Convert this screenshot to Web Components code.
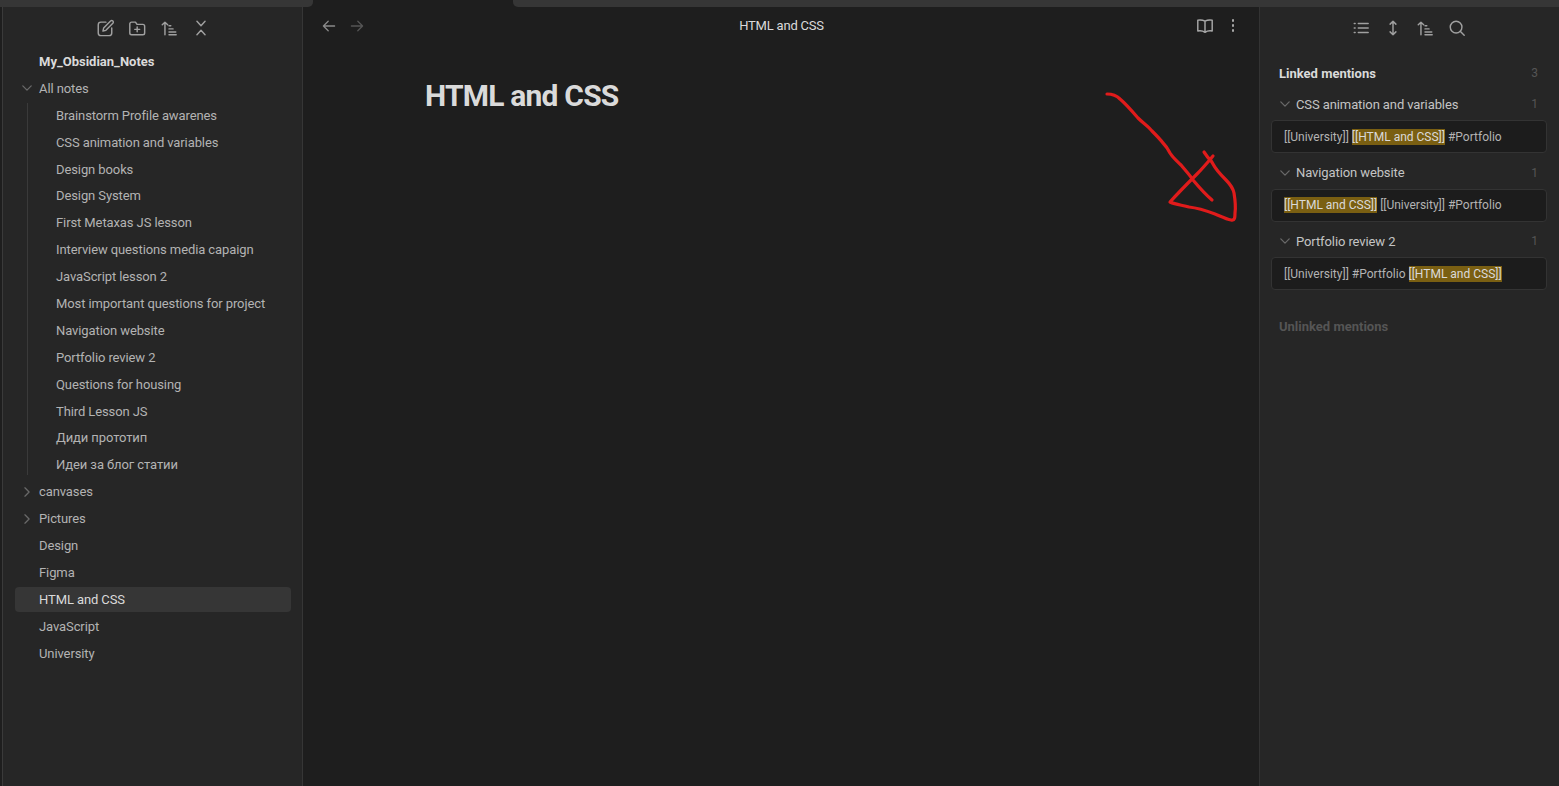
<!DOCTYPE html>
<html>
<head>
<meta charset="utf-8">
<title>HTML and CSS</title>
<style>
  html, body { margin: 0; height: 100%; background: #1e1e1e; overflow: hidden; }
  body { font-family: Roboto, "Open Sans", sans-serif; color: #b3b3b3; }
</style>
</head>
<body>
<obs-app>
  <file-explorer slot="left"></file-explorer>
  <note-view slot="main" title-text="HTML and CSS"></note-view>
  <backlink-pane slot="right"></backlink-pane>
</obs-app>

<script>
const ICONS = {
  edit: '<path d="M11 3.5H5.5a3 3 0 0 0-3 3v9a3 3 0 0 0 3 3h9a3 3 0 0 0 3-3V10"/><path d="M16.2 2.3a1.6 1.6 0 0 1 2.5 2.5L11 12.6l-3.3.8.8-3.3z"/>',
  folder: '<path d="M4 17.5h12.5a2 2 0 0 0 2-2V8a2 2 0 0 0-2-2H10L8.3 3.5H4a2 2 0 0 0-2 2v10a2 2 0 0 0 2 2z"/><path d="M10.2 8.8v5.5M7.5 11.5H13"/>',
  sort: '<path d="M5.5 17.5V3.5M2.5 6.5l3-3 3 3"/><path d="M10 7.5h2M10 11h4.5M10 14.5h7.5M10 17.5h8"/>',
  collapse: '<path d="M5.500 2.500 10 7.500l4.500-5M5.500 17.500 10 12.500l4.500 5"/>',
  list: '<path d="M7 5h11M7 10h11M7 15h11M2.500 5h1M2.500 10h1M2.500 15h1"/>',
  expand: '<path d="M10 2.500v15M6.800 5.700 10 2.500l3.200 3.200M6.800 14.300 10 17.500l3.200-3.200"/>',
  search: '<circle cx="9" cy="9" r="6.500"/><path d="m18 18-4.400-4.400"/>',
  back: '<path d="M17 10H3M9 4l-6 6 6 6"/>',
  forward: '<path d="M3 10h14M11 4l6 6-6 6"/>',
  book: '<path d="M10 5.500V17M10 4.500C8 3.500 5 3 2 3.500v12c3-.5 6 0 8 1.500 2-1.500 5-2 8-1.500v-12C15 3 12 3.500 10 4.500z"/>',
  chevronDown: '<path d="m4 7 6 6 6-6"/>',
  chevronRight: '<path d="m7 4 6 6-6 6"/>'
};

function iconSvg(name, size, weight) {
  return `<svg width="${size}" height="${size}" viewBox="0 0 20 20" fill="none" stroke="currentColor" stroke-width="${weight || 1.6}" stroke-linecap="round" stroke-linejoin="round">${ICONS[name]}</svg>`;
}

/** Icon button */
class ObsIcon extends HTMLElement {
  connectedCallback() {
    const size = this.getAttribute("size") || 18;
    this.attachShadow({ mode: "open" });
    this.shadowRoot.innerHTML = `
      <style>
        :host { display: inline-flex; align-items: center; justify-content: center; color: inherit; }
        svg { display: block; }
      </style>
      ${iconSvg(this.getAttribute("name"), size, this.getAttribute("weight"))}`;
  }
}

/** App shell */
const appTemplate = document.createElement("template");
appTemplate.innerHTML = `
  <style>
    :host { display: block; height: 786px; position: relative; overflow: hidden; }
    .tabs { display: flex; height: 7px; background: #1e1e1e; }
    .tabs .strip { background: #363636; }
    .tabs .strip.left { width: 313px; border-radius: 0 0 5px 0; }
    .tabs .gap { width: 200px; }
    .tabs .strip.right { flex: 1; border-radius: 0 0 0 5px; }
    .panes { display: grid; grid-template-columns: 303px 1fr 300px; height: 779px; }
  </style>
  <div class="tabs"><div class="strip left"></div><div class="gap"></div><div class="strip right"></div></div>
  <div class="panes">
    <slot name="left"></slot>
    <slot name="main"></slot>
    <slot name="right"></slot>
  </div>
`;
class ObsApp extends HTMLElement {
  constructor() {
    super();
    this.attachShadow({ mode: "open" });
    this.shadowRoot.append(appTemplate.content.cloneNode(true));
  }
}

/** Tree row */
const treeRowTemplate = document.createElement("template");
treeRowTemplate.innerHTML = `
  <style>
    :host { display: flex; align-items: center; height: 25px; box-sizing: border-box; font-size: 13px; letter-spacing: -0.1px; color: #b3b3b3; position: relative; margin: 0 11px 1.900px 12px; border-radius: 4px; padding-left: 24px; white-space: nowrap; }
    :host([bold]) { color: #dadada; font-weight: 700; letter-spacing: 0; }
    :host([depth="1"]) { padding-left: 41px; }
    :host([active]) { background: #363636; color: #dadada; }
    .chev { position: absolute; left: 5px; top: 5.500px; color: #6a6a6a; display: none; }
    :host([chevron]) .chev { display: inline-flex; }
  </style>
  <span class="chev"></span><slot></slot>
`;
class TreeRow extends HTMLElement {
  constructor() {
    super();
    this.attachShadow({ mode: "open" });
    this.shadowRoot.append(treeRowTemplate.content.cloneNode(true));
  }
  connectedCallback() {
    const c = this.getAttribute("chevron");
    if (c) this.shadowRoot.querySelector(".chev").innerHTML = iconSvg(c === "down" ? "chevronDown" : "chevronRight", 14, 1.8);
  }
}

/** File explorer */
const explorerTemplate = document.createElement("template");
explorerTemplate.innerHTML = `
  <style>
    :host { display: block; background: #262626; border-left: 1px solid #3a3a3a; margin-left: 2px; border-right: 1px solid #363636; height: 100%; box-sizing: border-box; }
    .toolbar { display: flex; justify-content: center; align-items: center; gap: 14px; height: 41px; margin-bottom: 1px; color: #a0a0a0; }
    .group { position: relative; }
    .group::before { content: ""; position: absolute; left: 24px; top: 0; bottom: 2px; width: 1px; background: #3a3a3a; }
  </style>
  <div class="toolbar">
    <obs-icon name="edit" size="18"></obs-icon>
    <obs-icon name="folder" size="18"></obs-icon>
    <obs-icon name="sort" size="18"></obs-icon>
    <obs-icon name="collapse" size="18"></obs-icon>
  </div>
  <tree-row bold>My_Obsidian_Notes</tree-row>
  <tree-row chevron="down">All notes</tree-row>
  <div class="group">
    <tree-row depth="1">Brainstorm Profile awarenes</tree-row>
    <tree-row depth="1">CSS animation and variables</tree-row>
    <tree-row depth="1">Design books</tree-row>
    <tree-row depth="1">Design System</tree-row>
    <tree-row depth="1">First Metaxas JS lesson</tree-row>
    <tree-row depth="1">Interview questions media capaign</tree-row>
    <tree-row depth="1">JavaScript lesson 2</tree-row>
    <tree-row depth="1">Most important questions for project</tree-row>
    <tree-row depth="1">Navigation website</tree-row>
    <tree-row depth="1">Portfolio review 2</tree-row>
    <tree-row depth="1">Questions for housing</tree-row>
    <tree-row depth="1">Third Lesson JS</tree-row>
    <tree-row depth="1">Диди прототип</tree-row>
    <tree-row depth="1">Идеи за блог статии</tree-row>
  </div>
  <tree-row chevron="right">canvases</tree-row>
  <tree-row chevron="right">Pictures</tree-row>
  <tree-row>Design</tree-row>
  <tree-row>Figma</tree-row>
  <tree-row active>HTML and CSS</tree-row>
  <tree-row>JavaScript</tree-row>
  <tree-row>University</tree-row>
`;
class FileExplorer extends HTMLElement {
  constructor() {
    super();
    this.attachShadow({ mode: "open" });
    this.shadowRoot.append(explorerTemplate.content.cloneNode(true));
  }
}

/** Note view */
const noteTemplate = document.createElement("template");
noteTemplate.innerHTML = `
  <style>
    :host { display: block; background: #1e1e1e; height: 100%; position: relative; }
    header { display: grid; grid-template-columns: 1fr auto 1fr; align-items: center; height: 37px; padding: 0 17px 0 18px; }
    .nav { display: flex; gap: 12px; color: #8a8a8a; }
    .nav .off { color: #555; }
    .name { font-size: 13px; letter-spacing: -0.2px; color: #dadada; }
    .actions { display: flex; justify-content: flex-end; gap: 10px; color: #a8a8a8; }
    .dots { display: flex; flex-direction: column; gap: 2.500px; width: 18px; align-items: center; justify-content: center; }
    .dots i { width: 2.500px; height: 2.500px; border-radius: 50%; background: #a8a8a8; }
    h1 { margin: 32px 0 0 122px; font-size: 30px; letter-spacing: -0.8px; line-height: 40px; font-weight: 700; color: #dadada; }
    svg.ink { position: absolute; left: 0; top: 0; overflow: visible; pointer-events: none; }
  </style>
  <header>
    <div class="nav"><obs-icon name="back" size="16"></obs-icon><obs-icon class="off" name="forward" size="16"></obs-icon></div>
    <div class="name"></div>
    <div class="actions"><obs-icon name="book" size="18"></obs-icon><div class="dots"><i></i><i></i><i></i></div></div>
  </header>
  <h1></h1>
  <svg class="ink" width="956" height="779" viewBox="303 7 956 779" fill="none" stroke="#e01b1b" stroke-width="3.200" stroke-linecap="round" stroke-linejoin="round">
    <path d="M1107 94c5 0 9 1 13 5 6 5 12 12 18 19 5 5 10 8 14 13 4 4 8 8 11 12 3 3 5 6 7 10 3 5 7 8 11 12 4 5 8 9 12 15 5 6 12 14 19 20"/>
    <path d="M1204 152c2 3 5 7 7 9M1213 156c-5 6-10 12-16 18-9 9-18 18-27 28 6 3 13 3 19 5 9 1 18 4 26 7 5 2 11 5 16 6 4 1 4-3 4-7 1-7 0-14-1-20-1-5-4-9-8-13-5-5-10-10-13-16-1-2-2-3-3-5"/>
  </svg>
`;
class NoteView extends HTMLElement {
  constructor() {
    super();
    this.attachShadow({ mode: "open" });
    this.shadowRoot.append(noteTemplate.content.cloneNode(true));
  }
  connectedCallback() {
    const t = this.getAttribute("title-text");
    this.shadowRoot.querySelector(".name").textContent = t;
    this.shadowRoot.querySelector("h1").textContent = t;
  }
}

/** Backlink group */
const backlinkTemplate = document.createElement("template");
backlinkTemplate.innerHTML = `
  <style>
    :host { display: block; font-size: 12px; }
    .head { display: flex; align-items: center; height: 32px; margin-left: 18px; margin-right: 21px; font-size: 13px; letter-spacing: -0.1px; color: #c4c4c4; }
    .head obs-icon { color: #6a6a6a; margin-right: 4px; width: 14px; }
    .head .t { flex: 1; }
    .head .n { color: #555; font-size: 12px; }
    .card { margin: 0 12px 0 11px; height: 33px; box-sizing: border-box; background: #1c1c1c; border: 1px solid #333; border-radius: 4px; padding-left: 12px; display: flex; align-items: center; color: #b3b3b3; white-space: pre; }
    ::slotted(mark) { background: #7a5f12; color: #dadada; padding: 1px 0; }
  </style>
  <div class="head"><obs-icon name="chevronDown" size="14" weight="1.800"></obs-icon><span class="t"></span><span class="n">1</span></div>
  <div class="card"><span><slot></slot></span></div>
`;
class BacklinkGroup extends HTMLElement {
  constructor() {
    super();
    this.attachShadow({ mode: "open" });
    this.shadowRoot.append(backlinkTemplate.content.cloneNode(true));
  }
  connectedCallback() {
    this.shadowRoot.querySelector(".t").textContent = this.getAttribute("heading");
  }
}

/** Backlinks pane */
const paneTemplate = document.createElement("template");
paneTemplate.innerHTML = `
  <style>
    :host { display: block; background: #262626; border-left: 1px solid #333; height: 100%; box-sizing: border-box; }
    .toolbar { display: flex; justify-content: center; align-items: center; gap: 14px; height: 41px; color: #a0a0a0; padding-right: 1px; }
    .title { display: flex; justify-content: space-between; align-items: center; height: 28px; margin: 11px 21px 1px 19px; font-size: 13px; font-weight: 700; color: #dadada; }
    .title span:last-child { color: #555; font-weight: 400; font-size: 12px; }
    .unlinked { margin: 28px 0 0 19px; font-size: 13px; line-height: 18px; font-weight: 700; color: #555; }
    backlink-group + backlink-group { margin-top: 3.500px; }
  </style>
  <div class="toolbar">
    <obs-icon name="list" size="18"></obs-icon>
    <obs-icon name="expand" size="18"></obs-icon>
    <obs-icon name="sort" size="18"></obs-icon>
    <obs-icon name="search" size="18"></obs-icon>
  </div>
  <div class="title"><span>Linked mentions</span><span>3</span></div>
  <backlink-group heading="CSS animation and variables">[[University]] <mark>[[HTML and CSS]]</mark> #Portfolio</backlink-group>
  <backlink-group heading="Navigation website"><mark>[[HTML and CSS]]</mark> [[University]] #Portfolio</backlink-group>
  <backlink-group heading="Portfolio review 2">[[University]] #Portfolio <mark>[[HTML and CSS]]</mark></backlink-group>
  <div class="unlinked">Unlinked mentions</div>
`;
class BacklinkPane extends HTMLElement {
  constructor() {
    super();
    this.attachShadow({ mode: "open" });
    this.shadowRoot.append(paneTemplate.content.cloneNode(true));
  }
}

customElements.define("obs-icon", ObsIcon);
customElements.define("tree-row", TreeRow);
customElements.define("file-explorer", FileExplorer);
customElements.define("note-view", NoteView);
customElements.define("backlink-group", BacklinkGroup);
customElements.define("backlink-pane", BacklinkPane);
customElements.define("obs-app", ObsApp);
</script>
</body>
</html>
